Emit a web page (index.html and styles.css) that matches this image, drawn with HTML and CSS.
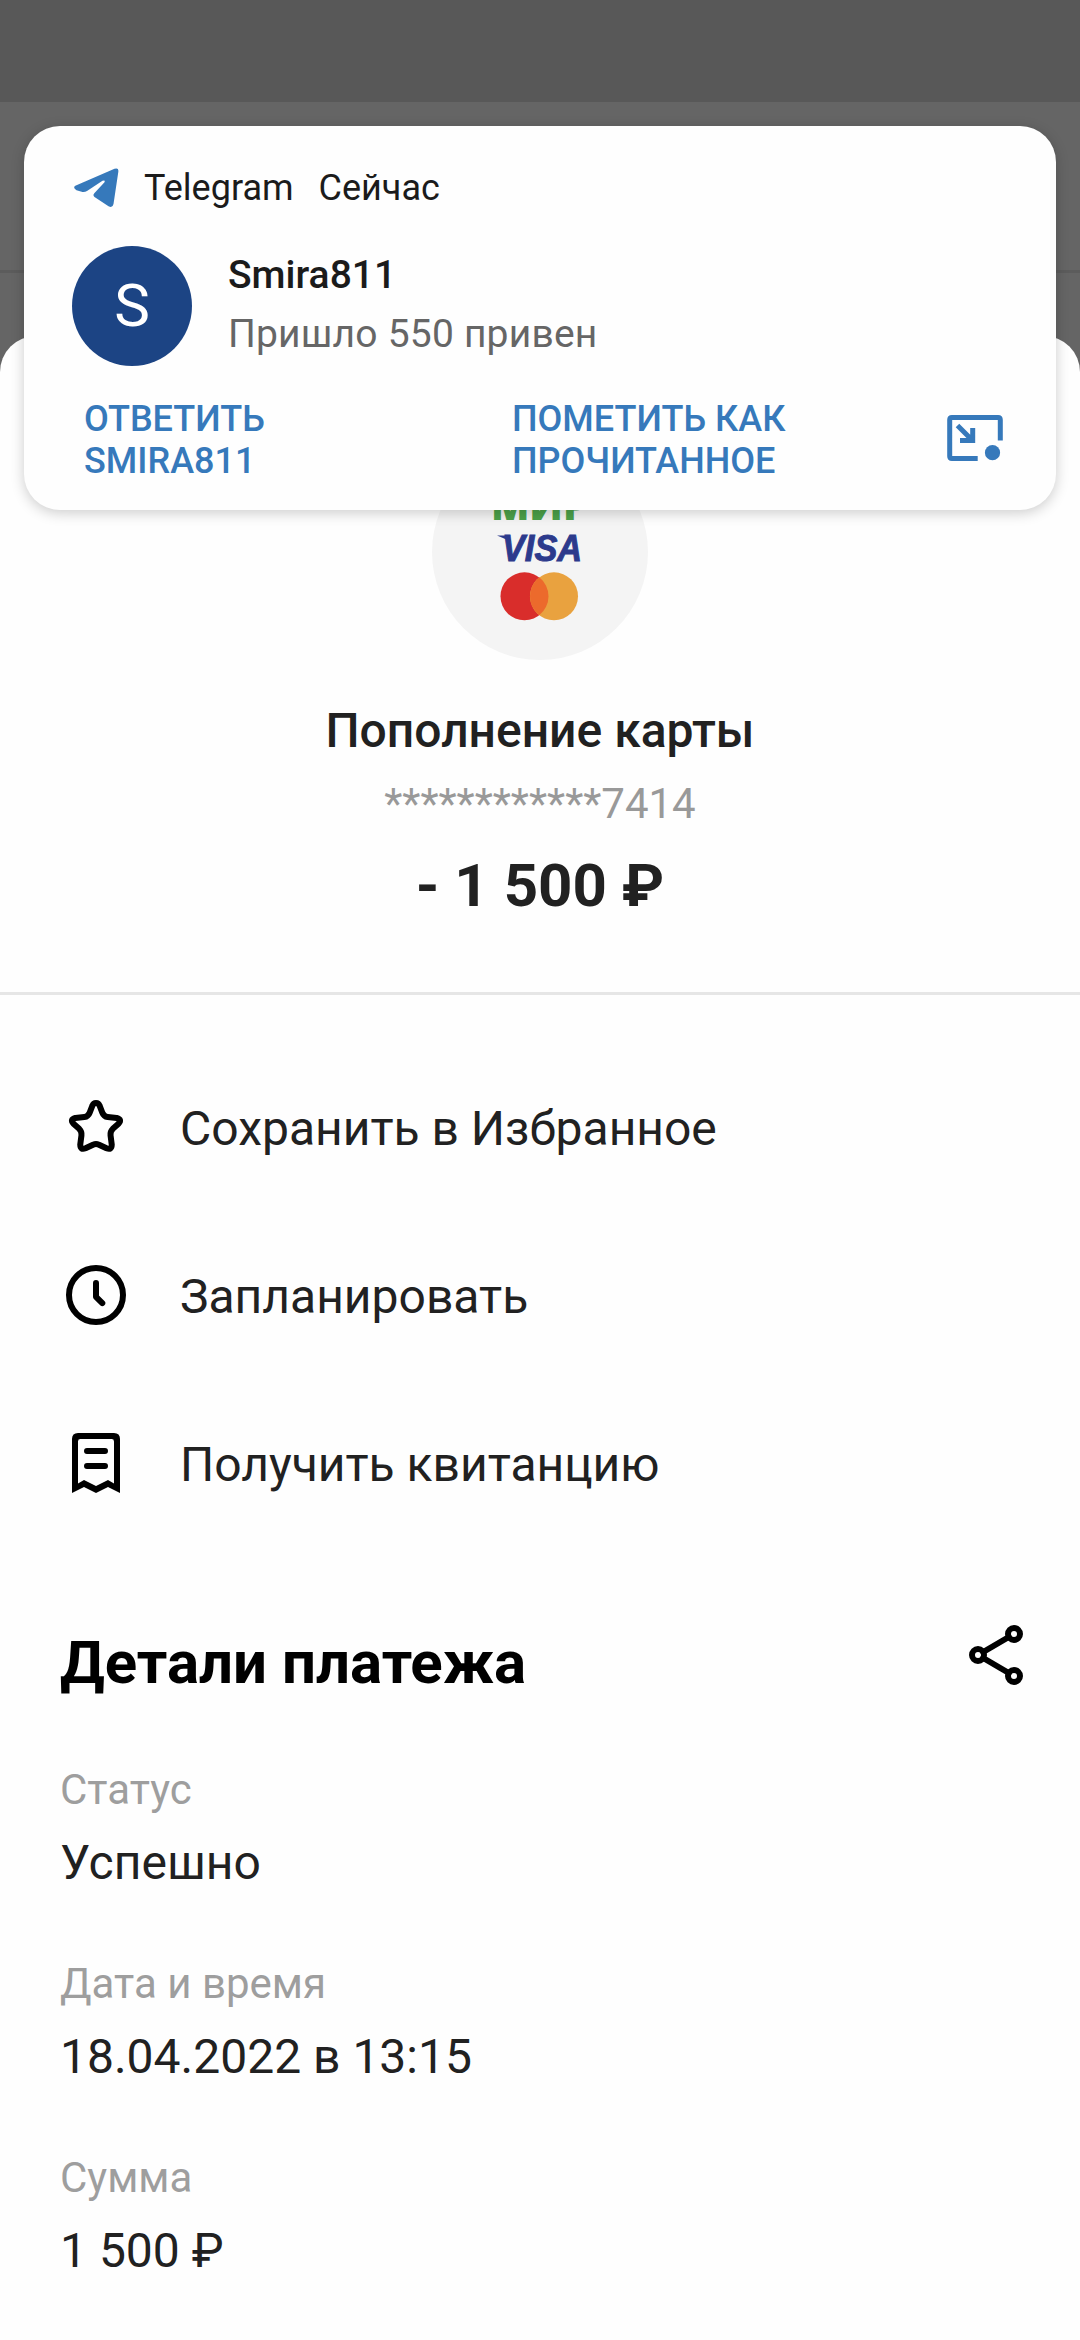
FILE: index.html
```
<!DOCTYPE html>
<html lang="ru">
<head>
<meta charset="utf-8">
<title>Детали платежа</title>
<link rel="stylesheet" href="styles.css">
</head>
<body>
<div class="screen">
  <div class="status-bar"></div>
  <div class="app-bar"></div>
  <main class="sheet">
    <section class="summary">
      <div class="logo">
        <svg width="216" height="216" viewBox="0 0 216 216">
          <text class="logo-mir" x="59" y="76" textLength="97" lengthAdjust="spacingAndGlyphs">МИР</text>
          <text class="logo-visa" x="70" y="117" textLength="80" lengthAdjust="spacingAndGlyphs">VISA</text>
          <path d="M65 91.500h12l2 6z" fill="#2c3a8c"/>
          <circle cx="92.500" cy="152.300" r="24" fill="#d92d2b"/>
          <circle cx="122" cy="152.300" r="24" fill="#e9a23f"/>
          <path d="M107.250 133.370a24 24 0 0 1 0 37.860a24 24 0 0 1 0 -37.860z" fill="#ec6a2c"/>
        </svg>
      </div>
      <h1 class="title">Пополнение карты</h1>
      <p class="card-number">************7414</p>
      <p class="amount">- 1 500 ₽</p>
    </section>
    <nav class="actions">
      <div class="action">
        <svg class="icon" viewBox="0 0 24 24"><path d="M12 4Q12.900 4 13.200 4.900L14.100 7.200Q14.600 8.500 15.900 8.700L18.900 9Q20.800 9.500 19.500 10.900L17.600 12.600Q16.700 13.500 16.850 14.800L17.250 17.900Q17.200 19.800 15.500 19.100L13 17.900Q12 17.500 11 17.900L8.500 19.100Q6.800 19.800 6.750 17.900L7.150 14.800Q7.300 13.500 6.400 12.600L4.500 10.900Q3.200 9.500 5.100 9L8.100 8.700Q9.400 8.500 9.900 7.200L10.800 4.900Q11.100 4 12 4Z"/></svg>
        <span class="action-label">Сохранить в Избранное</span>
      </div>
      <div class="action">
        <svg class="icon" viewBox="0 0 24 24"><circle cx="12" cy="12" r="9"/><path d="M12 8v4.600l2.100 2.100"/></svg>
        <span class="action-label">Запланировать</span>
      </div>
      <div class="action">
        <svg class="icon" viewBox="0 0 24 24"><path class="solid" fill-rule="evenodd" d="M6 2H18Q20 2 20 4V22L16 20L12 22L8 20L4 22V4Q4 2 6 2ZM6.800 4Q6 4 6 4.800V18.800L8 17.700L12 19.700L16 17.700L18 18.800V4.800Q18 4 17.200 4Z"/><path d="M9 8h6M9 13h6"/></svg>
        <span class="action-label">Получить квитанцию</span>
      </div>
    </nav>
    <section class="details">
      <header class="details-head">
        <h2 class="details-title">Детали платежа</h2>
        <svg class="icon" viewBox="0 0 24 24"><circle cx="6" cy="12" r="2"/><circle cx="18" cy="5" r="2"/><circle cx="18" cy="19" r="2"/><path d="M7.730 11L16.270 6M7.730 13L16.270 18"/></svg>
      </header>
      <dl class="fields">
        <div class="field"><dt>Статус</dt><dd>Успешно</dd></div>
        <div class="field"><dt>Дата и время</dt><dd>18.04.2022 в 13:15</dd></div>
        <div class="field"><dt>Сумма</dt><dd>1 500 ₽</dd></div>
      </dl>
    </section>
  </main>
  <aside class="notification">
    <div class="note-head">
      <svg width="45" height="40" viewBox="0 0 45 40"><path fill="#3679bb" d="M1.300 17.800L40.500 .8Q45 -.8 44.300 4L39.500 36Q38.500 40.500 34.500 38.200L20.500 29Q18.500 27.200 20.300 25.200L30.500 14.200Q31.500 11.500 28.500 12.800L13 23Q11 24.300 8.500 24L2.500 22.300Q-1.500 19.800 1.300 17.800Z"/></svg>
      <span class="note-app">Telegram</span>
      <span class="note-time">Сейчас</span>
    </div>
    <div class="note-body">
      <div class="avatar">S</div>
      <div class="message">
        <div class="sender">Smira811</div>
        <div class="text">Пришло 550 привен</div>
      </div>
    </div>
    <div class="note-actions">
      <div class="note-button">ОТВЕТИТЬ<br>SMIRA811</div>
      <div class="note-button">ПОМЕТИТЬ КАК<br>ПРОЧИТАННОЕ</div>
      <svg class="popup-icon" width="56" height="46" viewBox="0 0 56 46"><path d="M53.300 25.500V4.700Q53.300 2.500 51.100 2.500H4.900Q2.700 2.500 2.700 4.700V41.300Q2.700 43.500 4.900 43.500H30.700M10.500 10.500L25 25M25.700 13V25.500H13"/><circle cx="45.500" cy="37.700" r="7.600"/></svg>
    </div>
  </aside>
</div>
</body>
</html>
```
FILE: styles.css
```
* { box-sizing: border-box; margin: 0; padding: 0; }

body {
  font-family: Roboto, "Noto Sans", sans-serif;
  color: #212121;
}

.screen {
  position: relative;
  display: flex;
  flex-direction: column;
  width: 1080px;
  height: 2340px;
  overflow: hidden;
  background: #656565;
}

.status-bar { height: 102px; flex: none; background: #585858; }
.app-bar { height: 171px; flex: none; border-bottom: 3px solid #5c5c5c; }

.sheet {
  flex: 1;
  margin-top: 63px;
  padding-top: 108px;
  border-radius: 36px 36px 0 0;
  background: #fefefe;
}

.summary {
  display: flex;
  flex-direction: column;
  align-items: center;
  padding-bottom: 71px;
  border-bottom: 3px solid #e6e6e6;
}

.logo {
  width: 216px;
  height: 216px;
  border-radius: 50%;
  background: #f4f4f4;
}
.logo svg { display: block; }
.logo-mir { font: 800 40px "Open Sans", sans-serif; fill: #4ca149; }
.logo-visa { font: italic 700 36px "Liberation Sans", sans-serif; fill: #2c3a8c; stroke: #2c3a8c; stroke-width: 1; }

.title { margin-top: 43px; font-size: 48px; font-weight: 500; line-height: 56px; }
.card-number { margin-top: 20px; font-size: 42px; line-height: 50px; color: #999; }
.amount { margin-top: 22px; font-size: 60px; font-weight: 700; line-height: 70px; }

.actions { padding: 48px 60px 0; }
.action { display: flex; align-items: center; gap: 48px; height: 168px; }
.action-label { padding-top: 3px; font-size: 48px; line-height: 56px; }

.icon {
  display: block;
  flex: none;
  width: 72px;
  height: 72px;
  fill: none;
  stroke: #000;
  stroke-width: 2;
  stroke-linecap: round;
  stroke-linejoin: round;
}
.icon .solid { fill: #000; stroke: none; }

.details { padding: 72px 48px 0 60px; }
.details-head { display: flex; justify-content: space-between; align-items: flex-start; }
.details-title { padding-top: 9px; font-size: 60px; font-weight: 700; line-height: 70px; color: #000; }

.fields { display: flex; flex-direction: column; gap: 68px; margin-top: 67px; }
.field { display: flex; flex-direction: column; gap: 20px; }
.field dt { font-size: 42px; line-height: 50px; color: #9e9e9e; }
.field dd { font-size: 48px; line-height: 56px; }

.notification {
  position: absolute;
  left: 24px;
  top: 126px;
  width: 1032px;
  height: 384px;
  padding: 42px 48px 0;
  border-radius: 36px;
  background: #fefefe;
  box-shadow: 0 3px 14px rgba(0, 0, 0, .2);
  color: #1b1b1b;
}

.note-head { display: flex; align-items: center; height: 40px; padding-left: 2px; font-size: 36px; line-height: 42px; }
.note-app { margin-left: 25px; }
.note-time { margin-left: 25px; }

.note-body { display: flex; gap: 36px; margin-top: 38px; }
.avatar {
  width: 120px;
  height: 120px;
  border-radius: 50%;
  background: #1c4484;
  color: #fff;
  font-size: 60px;
  line-height: 120px;
  text-align: center;
}
.message { padding-top: 6px; }
.sender { font-size: 39px; font-weight: 500; line-height: 46px; }
.text { margin-top: 13px; font-size: 39px; line-height: 46px; letter-spacing: .2px; color: #666; }

.note-actions { display: grid; grid-template-columns: 428px 434px 56px; padding-left: 12px; margin-top: 32px; }
.note-button { font-size: 36px; font-weight: 500; line-height: 42px; color: #3679bb; }
.popup-icon { margin: 17px 0 0 1px; stroke: #3679bb; stroke-width: 5; fill: none; }
.popup-icon circle { fill: #3679bb; stroke: none; }
```
